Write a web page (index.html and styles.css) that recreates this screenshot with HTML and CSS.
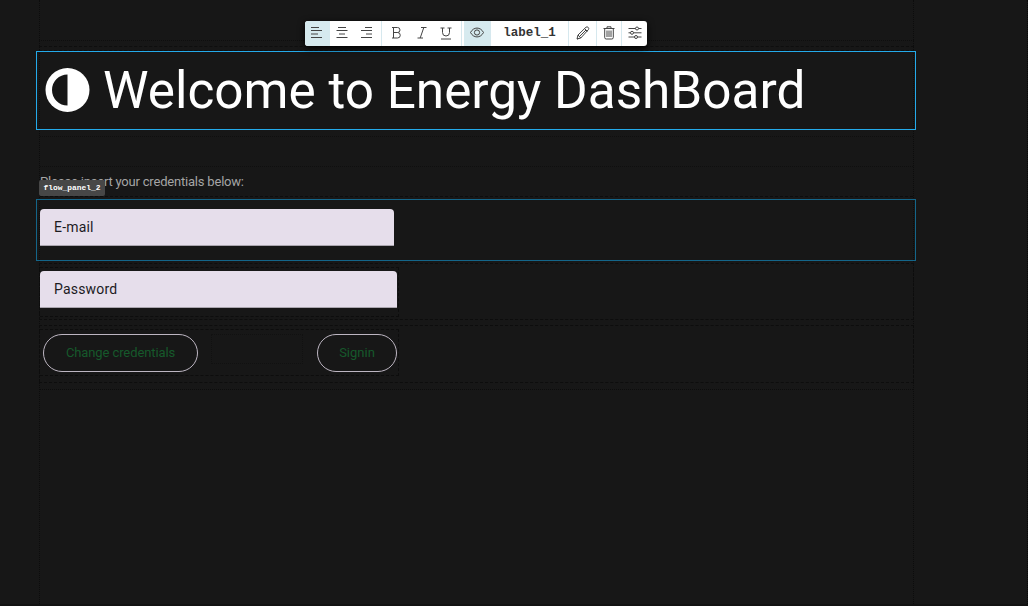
FILE: index.html
```html
<!DOCTYPE html>
<html lang="en">
<head>
<meta charset="utf-8">
<title>Energy DashBoard</title>
<link rel="stylesheet" href="styles.css">
</head>
<body>
<main class="canvas">
  <div class="column">
    <section class="title-row">
      <h1 class="title selected">
        <svg class="title-icon" viewBox="0 0 44 44"><circle cx="22" cy="22" r="22" fill="#fff"/><path d="M22 6.5a15.5 15.5 0 0 0 0 31z" fill="#171717"/></svg>
        <span class="title-text">Welcome to Energy DashBoard</span>
      </h1>
    </section>
    <div class="spacer"></div>
    <p class="hint">Please insert your credentials below:</p>
    <section class="panel panel-email">
      <div class="field field-email">E-mail</div>
      <span class="tag">flow_panel_2</span>
    </section>
    <section class="panel panel-password">
      <div class="slot"><div class="field">Password</div></div>
    </section>
    <section class="panel panel-actions">
      <div class="slot actions">
        <button class="btn btn-change">Change credentials</button>
        <div class="gap-box"></div>
        <button class="btn btn-sign">Signin</button>
      </div>
    </section>
    <div class="rest"></div>
  </div>
  <div class="toolbar">
    <span class="tool tool-align on"><svg viewBox="0 0 14 14"><path d="M1 1.500h8M1 4.500h11M1 8h7M1 11.500h11"/></svg></span>
    <span class="tool tool-align"><svg viewBox="0 0 14 14"><path d="M3 1.500h8M1.500 4.500h11M4 8h6M1.500 11.500h11"/></svg></span>
    <span class="tool tool-align sep"><svg viewBox="0 0 14 14"><path d="M5 1.500h7M1 4.500h11M6 8h6M1 11.500h11"/></svg></span>
    <span class="tool tool-text"><svg viewBox="0 0 14 14"><path d="M2 1.500h5.500a2.500 2.500 0 0 1 0 5H3.500m4 0a2.700 2.700 0 0 1 0 5.500H2M3.500 1.500V12"/></svg></span>
    <span class="tool tool-text"><svg viewBox="0 0 14 14"><path d="M6 1.500h5.500M2.500 12H8M8.800 1.500 5.200 12"/></svg></span>
    <span class="tool sep tool-u"><svg viewBox="0 0 14 14"><path d="M1.500 2h4M8.500 2h4M3.500 2v4.500a3.500 3.500 0 0 0 7 0V2M2 13h10"/></svg></span>
    <span class="tool on tool-eye"><svg viewBox="0 0 14 14"><path d="M.5 6.500C3.500.6 10.500.6 13.500 6.500c-3 5.900-10 5.900-13 0z"/><circle cx="7" cy="6.500" r="2.600"/></svg></span>
    <span class="tool-name">label_1</span>
    <span class="tool sep tool-edit"><svg viewBox="0 0 14 14"><path d="M1 13l1-4L10 1.200q1.200-.8 2.200.2t.2 2.200L4.800 12zM2 9l2.800 3M8.600 2.600l2.800 2.800M3.400 10.600l6.600-6.600M1 13l1.500-.5"/></svg></span>
    <span class="tool sep tool-bin"><svg viewBox="0 0 14 14"><path d="M1.500 2.500h11M5 2.500V.8h4v1.700M2.700 2.500v9q0 1.500 1.500 1.500h5.600q1.500 0 1.500-1.500v-9M5 4.500V11M7 4.500V11M9 4.500V11"/></svg></span>
    <span class="tool"><svg viewBox="0 0 14 14"><path d="M.5 2.500h7M10.500 2.500h3M.5 6.800h2M5.500 6.800h8M.5 11h6M9.500 11h4"/><circle cx="9" cy="2.500" r="1.500"/><circle cx="4" cy="6.800" r="1.500"/><circle cx="8" cy="11" r="1.500"/></svg></span>
  </div>
</main>
</body>
</html>
```
FILE: styles.css
```css
*, *::before, *::after { box-sizing: border-box; }
body { margin: 0; background: #171717; font-family: Roboto, sans-serif; }
.canvas { position: relative; width: 1028px; height: 606px; padding: 0 114px 0 39px; overflow: hidden; border-bottom: 2px solid #121212; border-right: 1px dotted #080808; }
.column { display: flex; flex-direction: column; width: 875px; height: 606px; border: 1px dotted #0c0c0c; border-width: 0 1px; }
.title-row { height: 90px; margin: 40px -1px 0; padding-top: 5px; border-top: 1px dotted #0e0e0e; }
.title-row::before { content: ""; display: block; height: 5px; border-top: 1px dashed #0e0e0e; border-bottom: 1px dashed #0e0e0e; }
.title { display: flex; align-items: center; gap: 13px; height: 79px; margin: 0 -2px 0 -3px; padding-left: 8px; border: 1px solid #24aaea; color: #fff; font-weight: 400; font-size: 51.300px; line-height: 77px; }
.title-icon { flex: none; width: 45px; height: 44px; margin-top: -1px; }
.title-text { white-space: nowrap; }
.spacer { height: 31px; margin-top: 6px; border: 1px dotted #0f0f0f; border-width: 1px 0; }
.hint { height: 29px; margin: 5px 0 3px; color: #a5a5a5; font-size: 13px; line-height: 20px; letter-spacing: -.2px; }
.hint::after { content: ""; display: block; height: 1px; margin-top: 4px; border-top: 1px dashed #0d0d0d; }
.panel { flex: none; border: 1px dashed #0d0d0d; margin: 0 -1px; }
.panel-email { position: relative; height: 62px; margin: -5px -3px 0 -4px; padding: 9px 3px; border: 1px solid #14668a; }
.field { height: 37px; padding-left: 14px; background: #e6deeb; border-bottom: 1px solid #aaa5ae; border-radius: 4px 4px 0 0; color: #1c1b1f; font-size: 14px; line-height: 36px; letter-spacing: .2px; }
.field-email { width: 354px; }
.tag { position: absolute; left: 2px; top: -20px; width: 66px; height: 16px; border-radius: 2px; background: #474747; color: #fff; font: bold 7.900px/15px "Liberation Mono", monospace; text-align: center; }
.panel-password { height: 57px; margin-top: 2px; padding: 3px 0 0; }
.slot { width: 359px; height: 50px; border: 1px dashed #0d0d0d; border-left: 0; }
.panel-password .slot { padding: 3px 1px 0 0; }
.panel-actions { height: 58px; margin-top: 5px; padding-top: 3px; }
.actions { display: flex; align-items: flex-start; height: 47px; padding: 4px 0 0 3px; }
.btn { flex: none; height: 38px; padding: 0; border: 1px solid #bdb6c2; border-radius: 19px; background: transparent; color: #16592b; font: 13px/36px Roboto, sans-serif; }
.btn-change { width: 155px; letter-spacing: -.1px; }
.gap-box { width: 92px; height: 30px; margin: 0 14px 0 13px; border: 1px dotted #111; }
.btn-sign { width: 80px; }
.rest { flex: 1; margin-top: 6px; border-top: 1px dotted #0c0c0c; }
.toolbar { position: absolute; left: 305px; top: 21px; display: flex; width: 342px; height: 25px; overflow: hidden; border-radius: 3px; background: #fff; box-shadow: 0 2px 7px #000; }
.tool { flex: none; display: flex; align-items: center; justify-content: center; width: 25px; height: 25px; padding-bottom: 1px; }
.tool svg { flex: none; width: 14px; height: 14px; fill: none; stroke: #444; stroke-width: 1; }
.tool-align { padding-right: 2px; }
.tool-text { padding-left: 4px; }
.on { background: #d6eaef; }
.sep { border-right: 1px solid #d6e8ee; }
.sep.tool { width: 27px; }
.tool-u.sep { width: 30px; padding-right: 1px; }
.tool-eye { width: 27px; margin-left: 2px; padding-right: 1px; border-right: 1px solid #d6e8ee; }
.tool-name { flex: none; width: 78px; border-right: 1px solid #d6e8ee; color: #333; font: bold 12.500px/25px "Liberation Mono", monospace; text-align: center; }
.tool-edit.sep { width: 28px; }
.tool-bin.sep { width: 25px; }
```
